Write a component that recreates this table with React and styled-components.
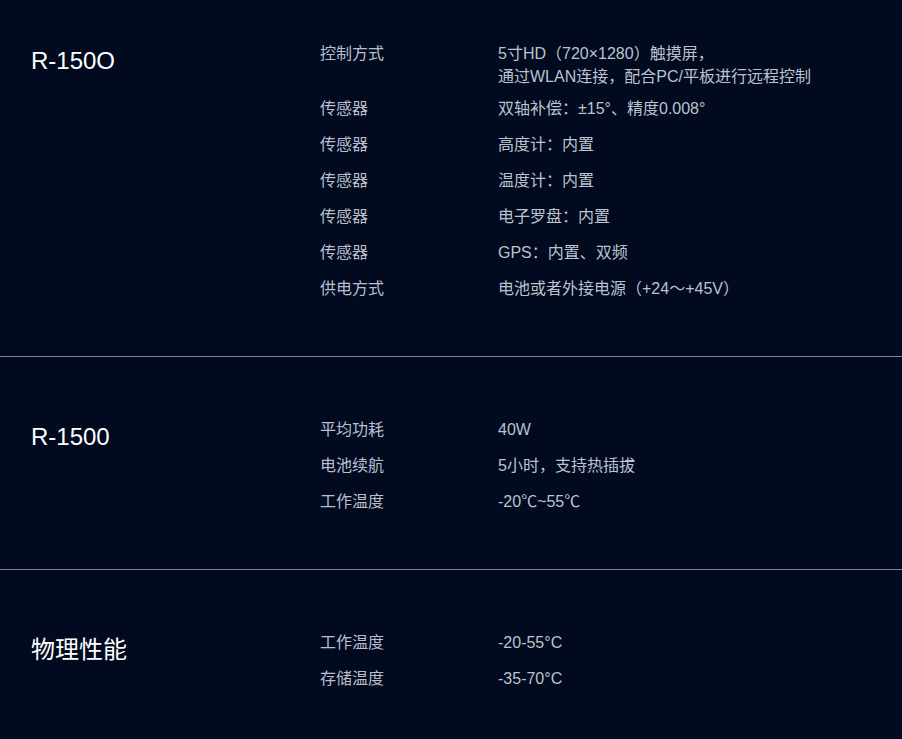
import React from 'react';
import styled, { createGlobalStyle } from 'styled-components';

const GlobalStyle = createGlobalStyle`
  html, body {
    margin: 0;
    padding: 0;
    background: #010a1f;
  }
  body {
    font-family: "Liberation Sans", "Noto Sans CJK SC", sans-serif;
  }
`;

const Page = styled.div`
  background: #010a1f;
  min-height: 739px;
`;

const Section = styled.section`
  display: flex;
  padding: ${(p) => (p.$first ? '42px' : '61px')} 0 55px 31px;
  border-bottom: ${(p) => (p.$last ? 'none' : '1px solid #7c838f')};
`;

const Title = styled.h2`
  width: 289px;
  flex-shrink: 0;
  margin: 0;
  font-size: 24px;
  line-height: 37px;
  font-weight: 400;
  color: #ffffff;
`;

const Specs = styled.div`
  display: flex;
  flex-direction: column;
`;

const Row = styled.div`
  display: flex;
  height: ${(p) => (p.$multi ? '46px' : '24px')};
  margin-bottom: ${(p) => (p.$multi ? '9px' : '12px')};

  &:last-child {
    margin-bottom: 0;
  }
`;

const Label = styled.div`
  width: 178px;
  flex-shrink: 0;
  height: 24px;
  font-size: 16px;
  line-height: 24px;
  color: #b9c0cc;
`;

const Value = styled.div`
  font-size: 16px;
  color: #bcc3ce;
`;

const Line = styled.div`
  height: ${(p) => (p.$multi ? '23px' : '24px')};
  line-height: ${(p) => (p.$multi ? '23px' : '24px')};
  white-space: nowrap;
`;

const sections = [
  {
    title: 'R-150O',
    rows: [
      ['控制方式', ['5寸HD（720×1280）触摸屏，', '通过WLAN连接，配合PC/平板进行远程控制']],
      ['传感器', '双轴补偿：±15°、精度0.008°'],
      ['传感器', '高度计：内置'],
      ['传感器', '温度计：内置'],
      ['传感器', '电子罗盘：内置'],
      ['传感器', 'GPS：内置、双频'],
      ['供电方式', '电池或者外接电源（+24～+45V）'],
    ],
  },
  {
    title: 'R-1500',
    rows: [
      ['平均功耗', '40W'],
      ['电池续航', '5小时，支持热插拔'],
      ['工作温度', '-20℃~55℃'],
    ],
  },
  {
    title: '物理性能',
    rows: [
      ['工作温度', '-20-55°C'],
      ['存储温度', '-35-70°C'],
    ],
  },
];

const App = () => (
  <Page>
    <GlobalStyle />
    {sections.map((section, i) => (
      <Section key={section.title} $first={i === 0} $last={i === sections.length - 1}>
        <Title>{section.title}</Title>
        <Specs>
          {section.rows.map(([label, value], j) => {
            const multi = Array.isArray(value);
            const lines = multi ? value : [value];
            return (
              <Row key={j} $multi={multi}>
                <Label>{label}</Label>
                <Value>
                  {lines.map((line, k) => (
                    <Line key={k} $multi={multi}>{line}</Line>
                  ))}
                </Value>
              </Row>
            );
          })}
        </Specs>
      </Section>
    ))}
  </Page>
);

export default App;
